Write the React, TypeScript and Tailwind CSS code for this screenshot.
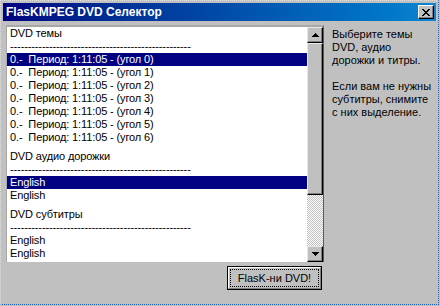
import React from "react";

const font = { fontFamily: '"Liberation Sans", Arial, sans-serif' };

type Row = { text: string; selected?: boolean } | "gap";

const DASHES = "-".repeat(51);

const ROWS: Row[] = [
  { text: "DVD темы" },
  { text: DASHES },
  { text: "0.-  Период: 1:11:05 - (угол 0)", selected: true },
  { text: "0.-  Период: 1:11:05 - (угол 1)" },
  { text: "0.-  Период: 1:11:05 - (угол 2)" },
  { text: "0.-  Период: 1:11:05 - (угол 3)" },
  { text: "0.-  Период: 1:11:05 - (угол 4)" },
  { text: "0.-  Период: 1:11:05 - (угол 5)" },
  { text: "0.-  Период: 1:11:05 - (угол 6)" },
  "gap",
  { text: "DVD аудио дорожки" },
  { text: DASHES },
  { text: "English", selected: true },
  { text: "English" },
  "gap",
  { text: "DVD субтитры" },
  { text: DASHES },
  { text: "English" },
  { text: "English" },
];

const HINT = [
  "Выберите темы",
  "DVD, аудио",
  "дорожки и титры.",
  "",
  "Если вам не нужны",
  "субтитры, снимите",
  "с них выделение.",
];

function Arrow({ down }: { down?: boolean }) {
  return (
    <svg width="7" height="4" viewBox="0 0 7 4" shapeRendering="crispEdges" className={down ? "rotate-180" : ""}>
      <path d="M3 0h1v1H3zM2 1h3v1H2zM1 2h5v1H1zM0 3h7v1H0z" fill="#000" />
    </svg>
  );
}

function ScrollButton({ down }: { down?: boolean }) {
  return (
    <div className="h-[16px] flex items-center justify-center bg-[#c0c0c0] border-t border-l border-[#e8e8e8] border-r border-b border-r-black border-b-black shadow-[inset_-1px_-1px_#808080]">
      <Arrow down={down} />
    </div>
  );
}

export default function App() {
  return (
    <div className="w-[440px] h-[306px] bg-[#c0c0c0] pr-px pb-px" style={font}>
      <div className="h-full flex flex-col border border-dotted border-l-[#e0e0e0] border-t-[#e0e0e0] border-r-[#1e5ad0] border-b-[#1e5ad0] p-[2px]">
        {/* title bar */}
        <div className="h-[18px] flex items-center justify-between pl-[3px] pr-[2px] bg-gradient-to-r from-[#000080] to-[#1084d0]">
          <span className="text-white font-bold text-[12px] leading-none">FlasKMPEG DVD Селектор</span>
          <div className="w-[16px] h-[14px] flex items-center justify-center bg-[#c0c0c0] border-t border-l border-[#ffffff] border-r border-b border-r-black border-b-black shadow-[inset_-1px_-1px_#808080]">
            <svg width="8" height="7" viewBox="0 0 8 7" shapeRendering="crispEdges">
              <path
                d="M0 0h2v1H0zM6 0h2v1H6zM1 1h2v1H1zM5 1h2v1H5zM2 2h4v1H2zM3 3h2v1H3zM2 4h4v1H2zM1 5h2v1H1zM5 5h2v1H5zM0 6h2v1H0zM6 6h2v1H6z"
                fill="#000"
              />
            </svg>
          </div>
        </div>

        <div className="flex pl-[3px] pt-[4px]">
          <div className="flex flex-col w-[318px]">
            {/* list box */}
            <div className="h-[237px] flex border-l border-t-2 border-r border-l-[#a8a8a8] border-t-[#a8a8a8] border-r-[#2a5cc0]">
              <div className="w-[300px] bg-white text-[11px] tracking-[-0.12px] text-black overflow-hidden">
                {ROWS.map((row, i) =>
                  row === "gap" ? (
                    <div key={i} className="h-[6px]" />
                  ) : (
                    <div
                      key={i}
                      className={`h-[13px] leading-[13px] pl-[3px] whitespace-pre ${
                        row.selected ? "bg-[#000080] text-white" : ""
                      }`}
                    >
                      {row.text}
                    </div>
                  ),
                )}
              </div>
              <div className="w-[16px] flex flex-col">
                <ScrollButton />
                <div className="h-[152px] bg-[#c0c0c0] border-t border-l border-[#e8e8e8] border-r border-b border-r-black border-b-black shadow-[inset_-1px_-1px_#808080]" />
                <div className="flex-1 bg-[repeating-conic-gradient(#ffffff_0%_25%,#c0c0c0_0%_50%)] bg-size-[2px_2px]" />
                <ScrollButton down />
              </div>
            </div>

            <div className="flex justify-end pr-[2px] mt-[4px]">
              <button className="w-[95px] h-[24px] border border-black bg-[#c0c0c0] p-0">
                <div className="h-full border-t border-l border-[#ffffff] border-r border-b border-r-[#808080] border-b-[#808080] p-[1px]">
                  <div className="h-full flex items-center justify-center border border-dotted border-black text-[11px] text-black">
                    FlasK-ни DVD!
                  </div>
                </div>
              </button>
            </div>
          </div>

          <div className="pl-[8px] pt-[3px] text-[11px] leading-[13px] text-black">
            {HINT.map((line, i) => (
              <div key={i} className="h-[13px] whitespace-nowrap">
                {line}
              </div>
            ))}
          </div>
        </div>
      </div>
    </div>
  );
}
